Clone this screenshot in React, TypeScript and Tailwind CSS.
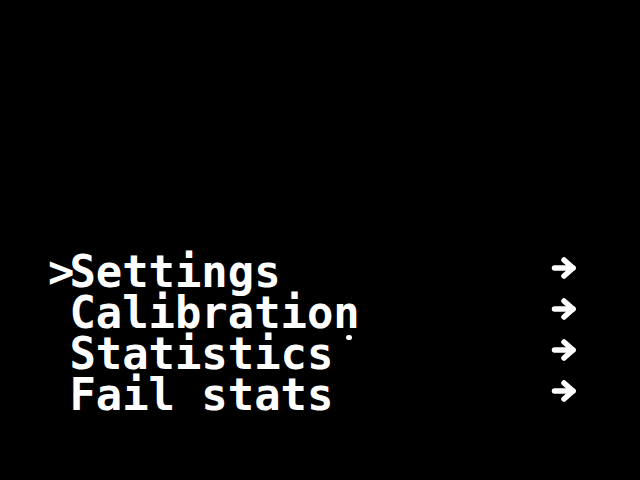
import React from "react";

function Arrow() {
  return (
    <svg width="28" height="22" viewBox="0 0 28 22" className="mt-[6px] shrink-0">
      <g stroke="#fff" strokeWidth="5.5" strokeLinecap="round" strokeLinejoin="round" fill="none">
        <line x1="3.5" y1="11" x2="22" y2="11" />
        <polyline points="13,3 22,11 13,19" />
      </g>
    </svg>
  );
}

const items = [
  { mark: ">", label: "Settings" },
  { mark: " ", label: "Calibration" },
  { mark: " ", label: "Statistics" },
  { mark: " ", label: "Fail stats" },
];

export default function App() {
  return (
    <div className="w-[640px] h-[480px] bg-black overflow-hidden">
      <div className="pt-[251px] pl-[43px] pr-[61px] flex flex-col">
        {items.map((it, i) => (
          <div key={i} className="relative flex justify-between h-[41px]">
            <div className="flex whitespace-pre font-['DejaVu_Sans_Mono',monospace] font-bold text-[43.85px] leading-[41px] text-white">
              <span className="w-[26.4px] pl-[5px] tracking-[-6px]">{it.mark}</span>
              <span>{it.label}</span>
            </div>
            {i === 2 && (
              <span className="absolute left-[303px] top-[2px] w-[6px] h-[5px] rounded-full bg-white" />
            )}
            <Arrow />
          </div>
        ))}
      </div>
    </div>
  );
}
